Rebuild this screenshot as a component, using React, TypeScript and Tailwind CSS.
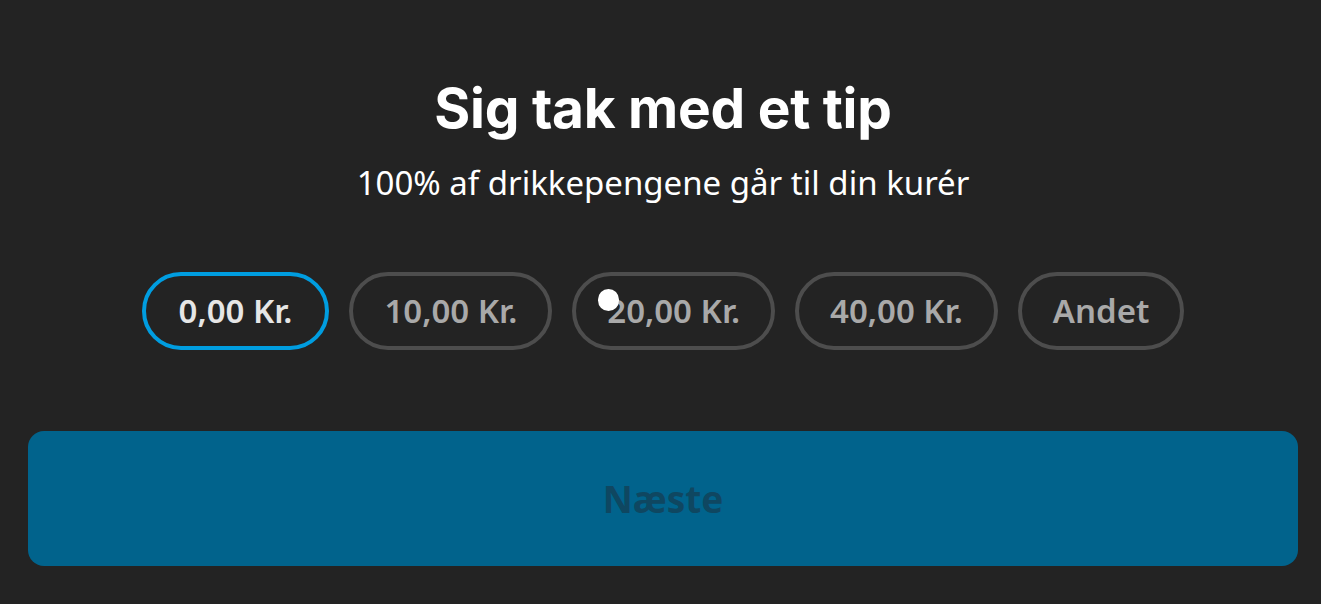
import { useState } from "react";

const tips = ["0,00 Kr.", "10,00 Kr.", "20,00 Kr.", "40,00 Kr.", "Andet"];

export default function App() {
  const [selected, setSelected] = useState(0);

  return (
    <div className="relative min-h-[604px] w-full bg-[#232323] pl-[28px] pr-[23px] pt-[76px] font-['Noto_Sans',sans-serif]">
      <h1 className="text-center font-['Inter',sans-serif] text-[55px] font-bold leading-[64px] tracking-[-0.005em] text-white">
        Sig tak med et tip
      </h1>
      <p className="mt-[23px] text-center text-[33px] leading-[40px] text-white">
        100% af drikkepengene går til din kurér
      </p>

      <div className="mt-[69px] flex justify-center gap-[20px]">
        {tips.map((t, i) => (
          <button
            key={t}
            onClick={() => setSelected(i)}
            className={
              i === selected
                ? "h-[78px] rounded-full border-4 border-[#009de0] px-[33px] text-[33px] font-semibold text-[#e6e6e6]"
                : "h-[78px] rounded-full border-4 border-[#4d4d4d] px-[31px] text-[33px] font-semibold text-[#a9a9a9]"
            }
          >
            {t}
          </button>
        ))}
      </div>

      <button className="mt-[81px] flex h-[135px] w-full items-center justify-center rounded-[16px] bg-[#01638c] text-[37px] font-bold text-[#0f4761]">
        Næste
      </button>

      <div className="absolute left-[598px] top-[289px] h-[22px] w-[21px] rounded-full bg-white" />
    </div>
  );
}
